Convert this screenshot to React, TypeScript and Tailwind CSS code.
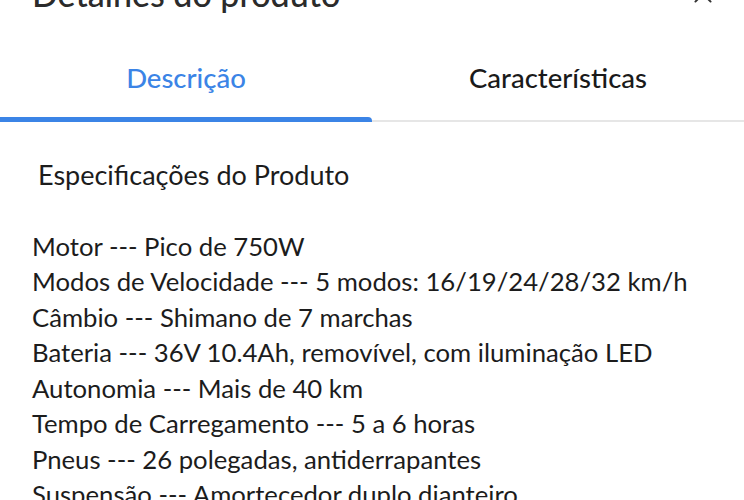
import React, { useState } from 'react';

const specs = [
  'Motor --- Pico de 750W',
  'Modos de Velocidade --- 5 modos: 16/19/24/28/32 km/h',
  'Câmbio --- Shimano de 7 marchas',
  'Bateria --- 36V 10.4Ah, removível, com iluminação LED',
  'Autonomia --- Mais de 40 km',
  'Tempo de Carregamento --- 5 a 6 horas',
  'Pneus --- 26 polegadas, antiderrapantes',
  'Suspensão --- Amortecedor duplo dianteiro',
  'Freios --- Disco mecânico dianteiro e traseiro',
];

const App: React.FC = () => {
  const [tab, setTab] = useState<'desc' | 'carac'>('desc');

  return (
    <div className="w-[744px] h-[500px] overflow-hidden bg-white text-[#1c1c1c]" style={{ fontFamily: 'Lato, "Noto Sans", sans-serif' }}>
      <div className="flex items-center justify-between pl-8 pr-[28px] h-[44px] -mt-[28px]">
        <h1 className="text-[34px] leading-[40px] font-medium text-[#2b2b2b] whitespace-nowrap">Detalhes do produto</h1>
        <button type="button" className="text-[#333]" aria-label="Fechar">
          <svg width="26" height="26" viewBox="0 0 24 24" fill="none" stroke="currentColor" strokeWidth="1.8" strokeLinecap="round">
            <path d="M5 5l14 14M19 5L5 19" />
          </svg>
        </button>
      </div>

      <div className="flex mt-[18px]">
        <button
          type="button"
          onClick={() => setTab('desc')}
          className={`relative flex-1 h-[88px] text-[27.5px] font-medium ${tab === 'desc' ? 'text-[#3b84e6]' : 'text-[#1a1a1a]'}`}
        >
          Descrição
          <span className={`absolute left-0 right-0 bottom-0 ${tab === 'desc' ? 'h-[5px] bg-[#3b84e6] rounded-tr-[4px]' : 'h-[2px] bg-[#e6e6e6]'}`} />
        </button>
        <button
          type="button"
          onClick={() => setTab('carac')}
          className={`relative flex-1 h-[88px] text-[27.5px] font-medium ${tab === 'carac' ? 'text-[#3b84e6]' : 'text-[#1a1a1a]'}`}
        >
          Características
          <span className={`absolute left-0 right-0 bottom-0 ${tab === 'carac' ? 'h-[5px] bg-[#3b84e6] rounded-tl-[4px]' : 'h-[2px] bg-[#e6e6e6]'}`} />
        </button>
      </div>

      <div className="px-8 pt-[35px] leading-[35.5px] whitespace-pre-wrap">
        <p className="text-[27px] pl-[6px]">Especificações do Produto</p>
        <p className="text-[25.7px] mt-[36px]">{specs.join('\n')}</p>
      </div>
    </div>
  );
};

export default App;
